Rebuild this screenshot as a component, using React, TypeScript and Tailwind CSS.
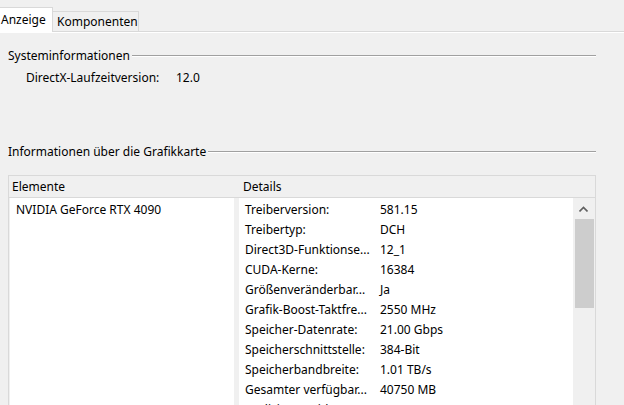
import React from "react";

type Row = { label: string; value: string };

const DETAILS: Row[] = [
  { label: "Treiberversion:", value: "581.15" },
  { label: "Treibertyp:", value: "DCH" },
  { label: "Direct3D-Funktionse...", value: "12_1" },
  { label: "CUDA-Kerne:", value: "16384" },
  { label: "Größenveränderbar...", value: "Ja" },
  { label: "Grafik-Boost-Taktfre...", value: "2550 MHz" },
  { label: "Speicher-Datenrate:", value: "21.00 Gbps" },
  { label: "Speicherschnittstelle:", value: "384-Bit" },
  { label: "Speicherbandbreite:", value: "1.01 TB/s" },
  { label: "Gesamter verfügbar...", value: "40750 MB" },
  { label: "Dedizierter Videosp...", value: "24564 MB GDDR6X" },
  { label: "Systemvideospeicher:", value: "0 MB" },
];

function GroupTitle({ children }: { children: React.ReactNode }) {
  return (
    <div className="flex items-center pl-[8px] pr-[28px] h-[16px]">
      <span className="leading-[16px] pr-[2px]">{children}</span>
      <div className="flex-1 h-[2px] border-t border-[#a0a0a0] bg-white" />
    </div>
  );
}

function Chevron({ up }: { up?: boolean }) {
  return (
    <svg width="9" height="6" viewBox="0 0 9 6" className="block">
      <path
        d={up ? "M0.5 5.5 L4.5 1.5 L8.5 5.5" : "M0.5 0.5 L4.5 4.5 L8.5 0.5"}
        fill="none"
        stroke="#606060"
        strokeWidth="1.6"
      />
    </svg>
  );
}

export default function App() {
  return (
    <div
      className="w-[624px] h-[405px] overflow-hidden bg-[#f0f0f0] text-[12px] text-black"
      style={{ fontFamily: '"Noto Sans", "Liberation Sans", sans-serif' }}
    >
      {/* Tab strip */}
      <div className="flex items-end h-[32px] border-b border-[#d9d9d9]">
        <div className="relative z-10 -mb-px h-[25px] w-[53px] bg-white border-t border-r border-[#d9d9d9] pl-[1px] pt-[4px] leading-[16px]">
          Anzeige
        </div>
        <div className="h-[20px] w-[86px] bg-[#f0f0f0] border-t border-r border-[#d9d9d9] pl-[4px] pt-[2px] leading-[16px]">
          Komponenten
        </div>
      </div>
      <div className="h-px bg-white" />

      {/* Systeminformationen */}
      <div className="mt-[15px]">
        <GroupTitle>Systeminformationen</GroupTitle>
      </div>
      <div className="flex mt-[6px] leading-[16px]">
        <span className="pl-[26px] w-[176px]">DirectX-Laufzeitversion:</span>
        <span>12.0</span>
      </div>

      {/* Grafikkarte */}
      <div className="mt-[58px]">
        <GroupTitle>Informationen über die Grafikkarte</GroupTitle>
      </div>

      <div className="ml-[8px] mt-[15px] w-[588px] border border-[#d9d9d9]">
        <div className="flex h-[22px] items-center border-b border-[#d9d9d9] leading-[16px]">
          <span className="pl-[3px] w-[234px]">Elemente</span>
          <span>Details</span>
        </div>
        <div className="flex gap-[5px] px-[1px] pb-[1px] h-[260px]">
          <div className="w-[224px] bg-white pt-[2px]">
            <div className="h-[20px] pl-[6px] flex items-center leading-[16px]">
              NVIDIA GeForce RTX 4090
            </div>
          </div>
          <div className="flex flex-1 bg-white">
            <div className="flex-1 pt-[2px] overflow-hidden">
              {DETAILS.map((r) => (
                <div key={r.label} className="flex h-[20px] items-center leading-[16px]">
                  <span className="pl-[6px] w-[141px] whitespace-nowrap overflow-hidden">
                    {r.label}
                  </span>
                  <span className="whitespace-nowrap">{r.value}</span>
                </div>
              ))}
            </div>
            {/* Scrollbar */}
            <div className="w-[21px] bg-[#f0f0f0] flex flex-col items-center">
              <div className="h-[21px] flex items-center justify-center">
                <Chevron up />
              </div>
              <div className="w-[19px] ml-[1px] h-[89px] bg-[#cdcdcd]" />
              <div className="flex-1" />
              <div className="h-[21px] flex items-center justify-center">
                <Chevron />
              </div>
            </div>
          </div>
        </div>
      </div>
    </div>
  );
}
